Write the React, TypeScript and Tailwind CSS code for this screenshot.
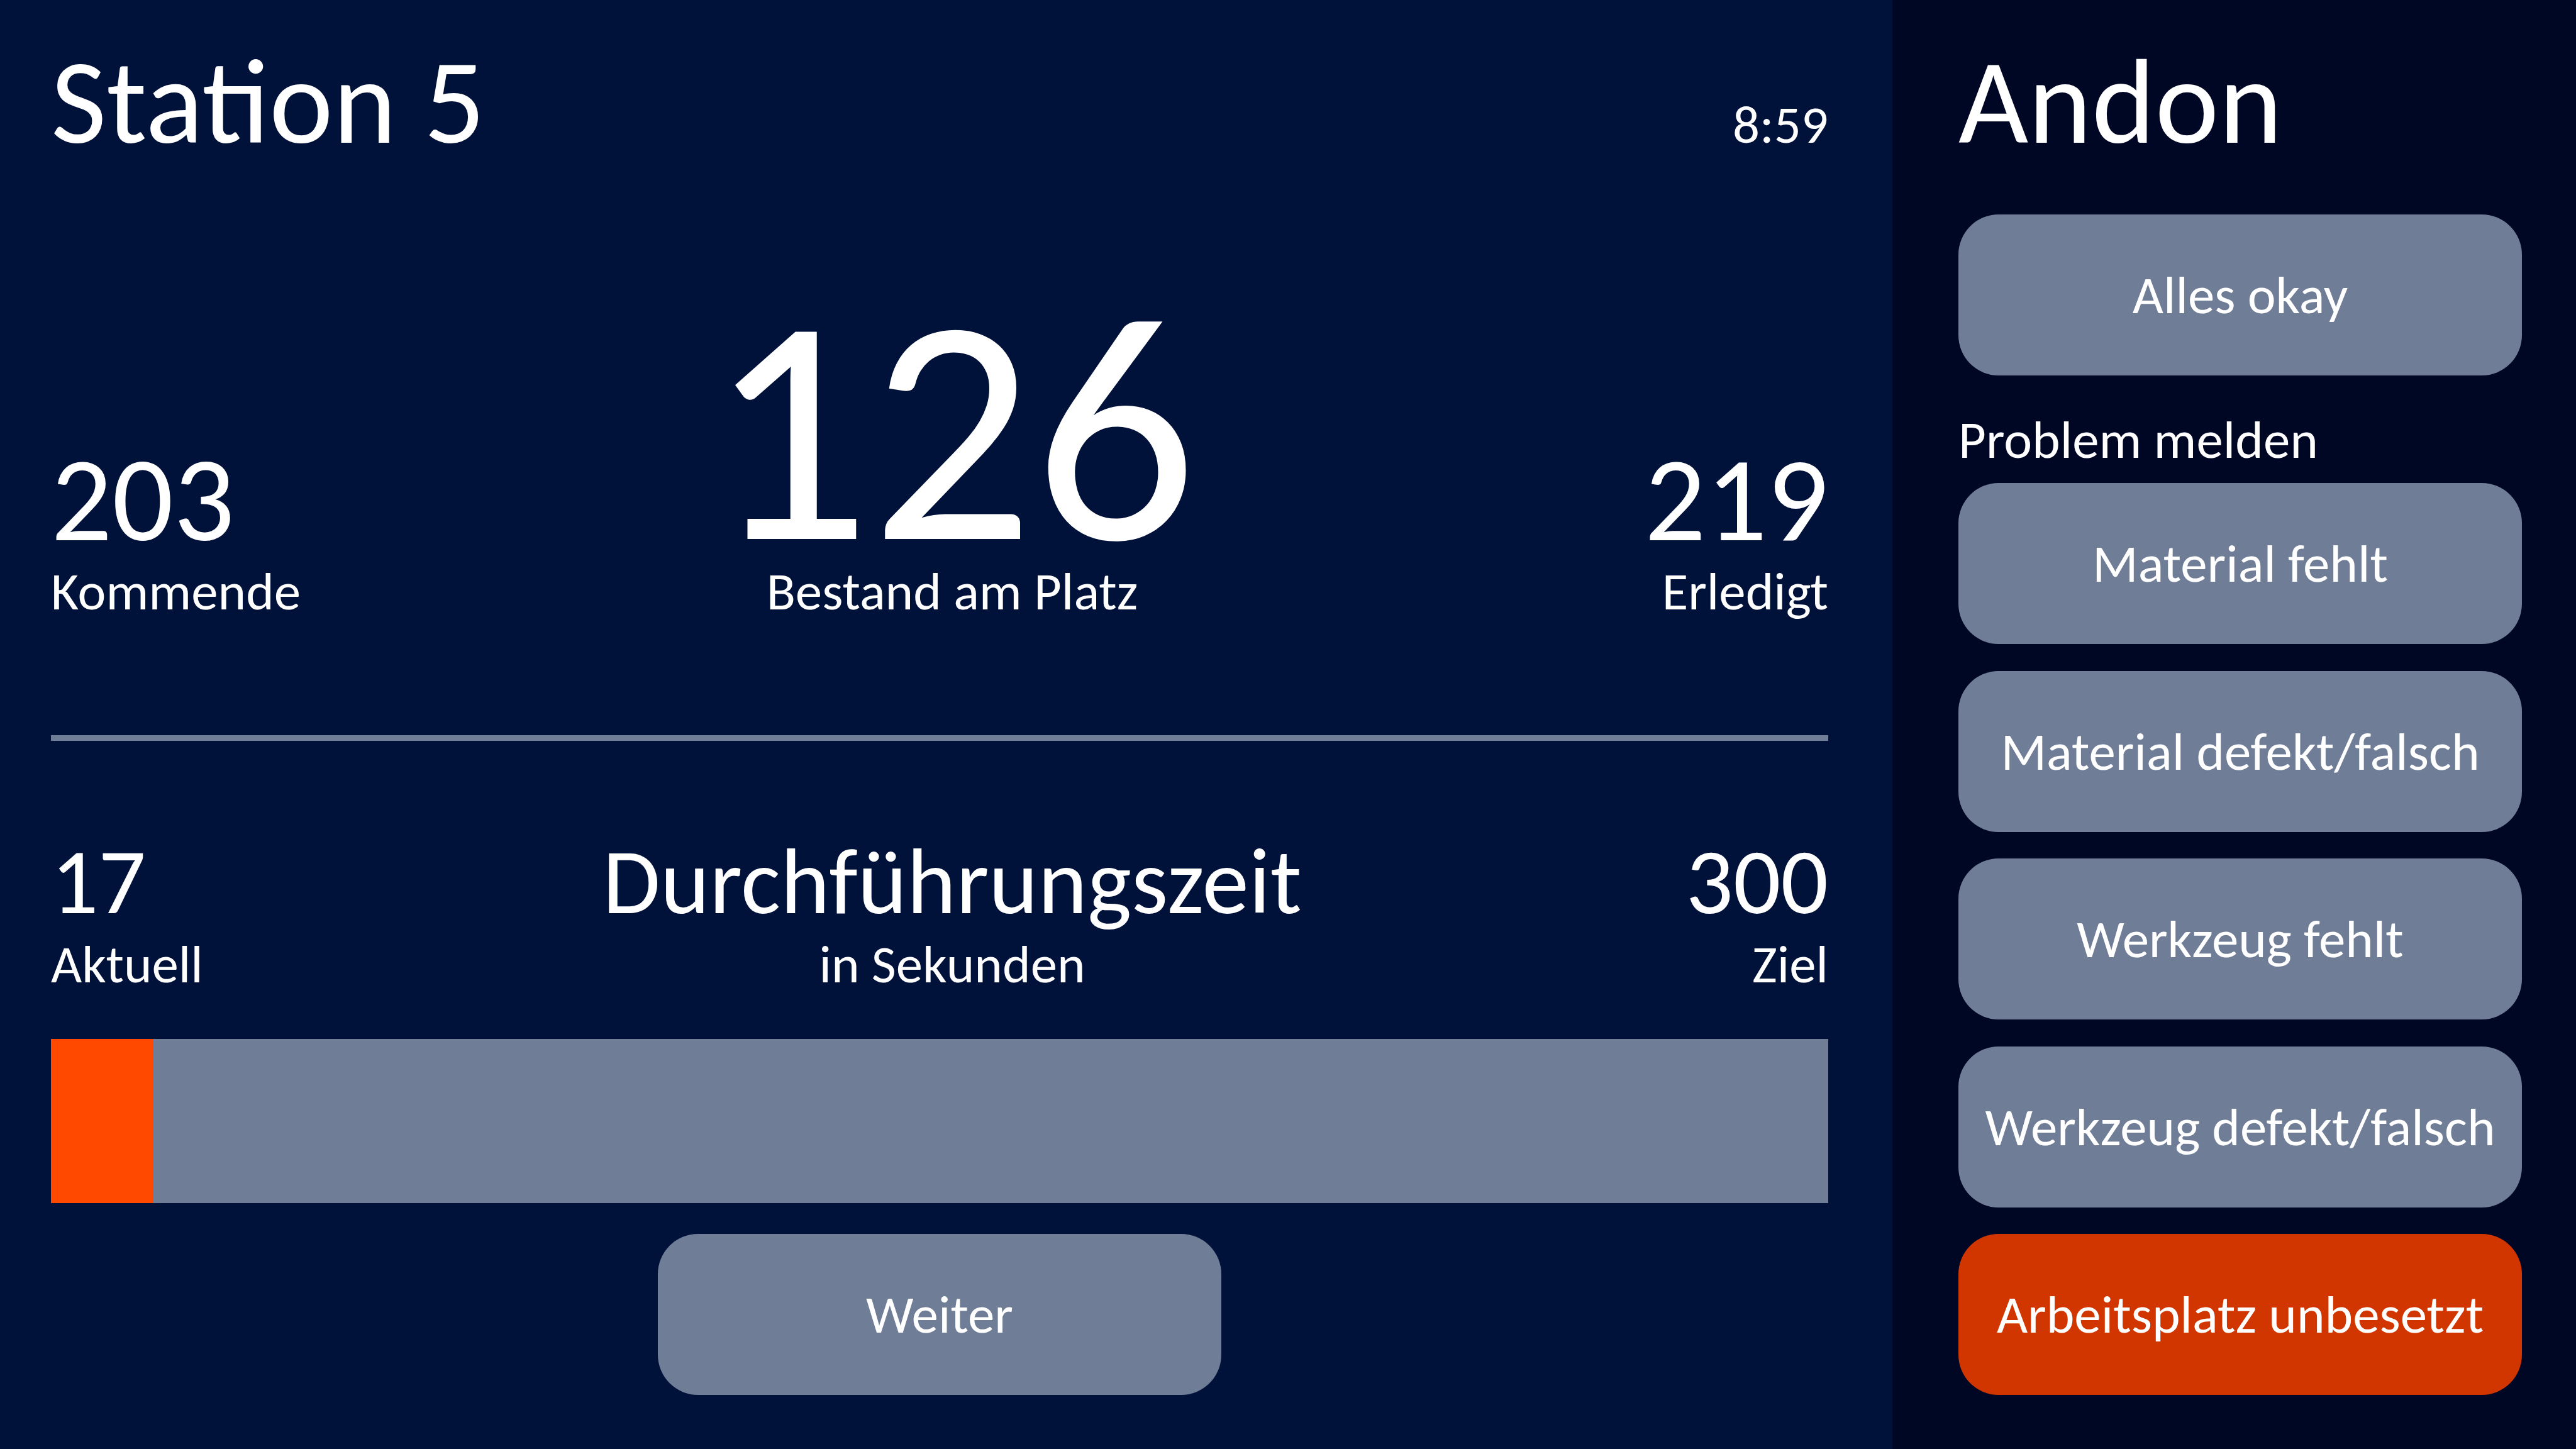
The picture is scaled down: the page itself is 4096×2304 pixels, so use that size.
import type { ReactNode } from 'react';

const tile =
  'flex h-[256px] w-full cursor-pointer items-center justify-center rounded-[64px] text-center text-[85px] leading-[104px] whitespace-nowrap text-white';

const problems = [
  { label: 'Material fehlt', active: false },
  { label: 'Material defekt/falsch', active: false },
  { label: 'Werkzeug fehlt', active: false },
  { label: 'Werkzeug defekt/falsch', active: false },
  { label: 'Arbeitsplatz unbesetzt', active: true },
];

function Caption({ children }: { children: ReactNode }) {
  return <p className="text-[85px] leading-[104px]">{children}</p>;
}

function TileButton({ label, active = false }: { label: string; active?: boolean }) {
  return (
    <button type="button" className={`${tile} ${active ? 'bg-[#d23600]' : 'bg-[#707d97]'}`}>
      {label}
    </button>
  );
}

export default function App() {
  return (
    <div className="flex min-h-screen w-full bg-[#001239] font-[Carlito,Calibri,Lato,sans-serif] text-white">
      <main className="flex flex-1 flex-col pt-[42px] pr-[102px] pb-[86px] pl-[81px]">
        <header className="flex items-baseline justify-between">
          <h1 className="text-[192px] leading-[240px]">Station 5</h1>
          <time className="text-[85px] leading-[104px]">8:59</time>
        </header>

        <section className="mt-[194px] grid grid-cols-[1fr_auto_1fr] items-end">
          <div>
            <p className="text-[192px] leading-[188px]">203</p>
            <Caption>Kommende</Caption>
          </div>
          <div className="pl-10 text-center">
            <p className="text-[512px] leading-[412px]">126</p>
            <Caption>Bestand am Platz</Caption>
          </div>
          <div className="text-right">
            <p className="text-[192px] leading-[188px]">219</p>
            <Caption>Erledigt</Caption>
          </div>
        </section>

        <hr className="mt-[177px] h-[9px] border-0 bg-[#707d97]" />

        <section className="mt-[143px] grid grid-cols-[1fr_auto_1fr] items-end">
          <div>
            <p className="text-[149px] leading-[160px]">17</p>
            <Caption>Aktuell</Caption>
          </div>
          <div className="pl-10 text-center">
            <h2 className="text-[149px] leading-[160px]">Durchführungszeit</h2>
            <Caption>in Sekunden</Caption>
          </div>
          <div className="text-right">
            <p className="text-[149px] leading-[160px]">300</p>
            <Caption>Ziel</Caption>
          </div>
        </section>

        <div
          role="progressbar"
          aria-label="Durchführungszeit"
          aria-valuemin={0}
          aria-valuemax={300}
          aria-valuenow={17}
          className="mt-[67px] h-[261px] w-full bg-[#707d97]"
        >
          <div className="h-full w-[163px] bg-[#ff4800]" />
        </div>

        <div className="mt-[49px] w-[896px] self-center">
          <TileButton label="Weiter" />
        </div>
      </main>

      <aside className="flex w-[1087px] flex-col bg-[#000724] pt-[42px] pr-[86px] pb-[86px] pl-[105px]">
        <h2 className="text-[192px] leading-[240px]">Andon</h2>
        <div className="mt-[59px]">
          <TileButton label="Alles okay" />
        </div>
        <h3 className="mt-[50px] text-[85px] leading-[104px]">Problem melden</h3>
        <div className="mt-[17px] flex flex-1 flex-col justify-between">
          {problems.map((p) => (
            <TileButton key={p.label} label={p.label} active={p.active} />
          ))}
        </div>
      </aside>
    </div>
  );
}
